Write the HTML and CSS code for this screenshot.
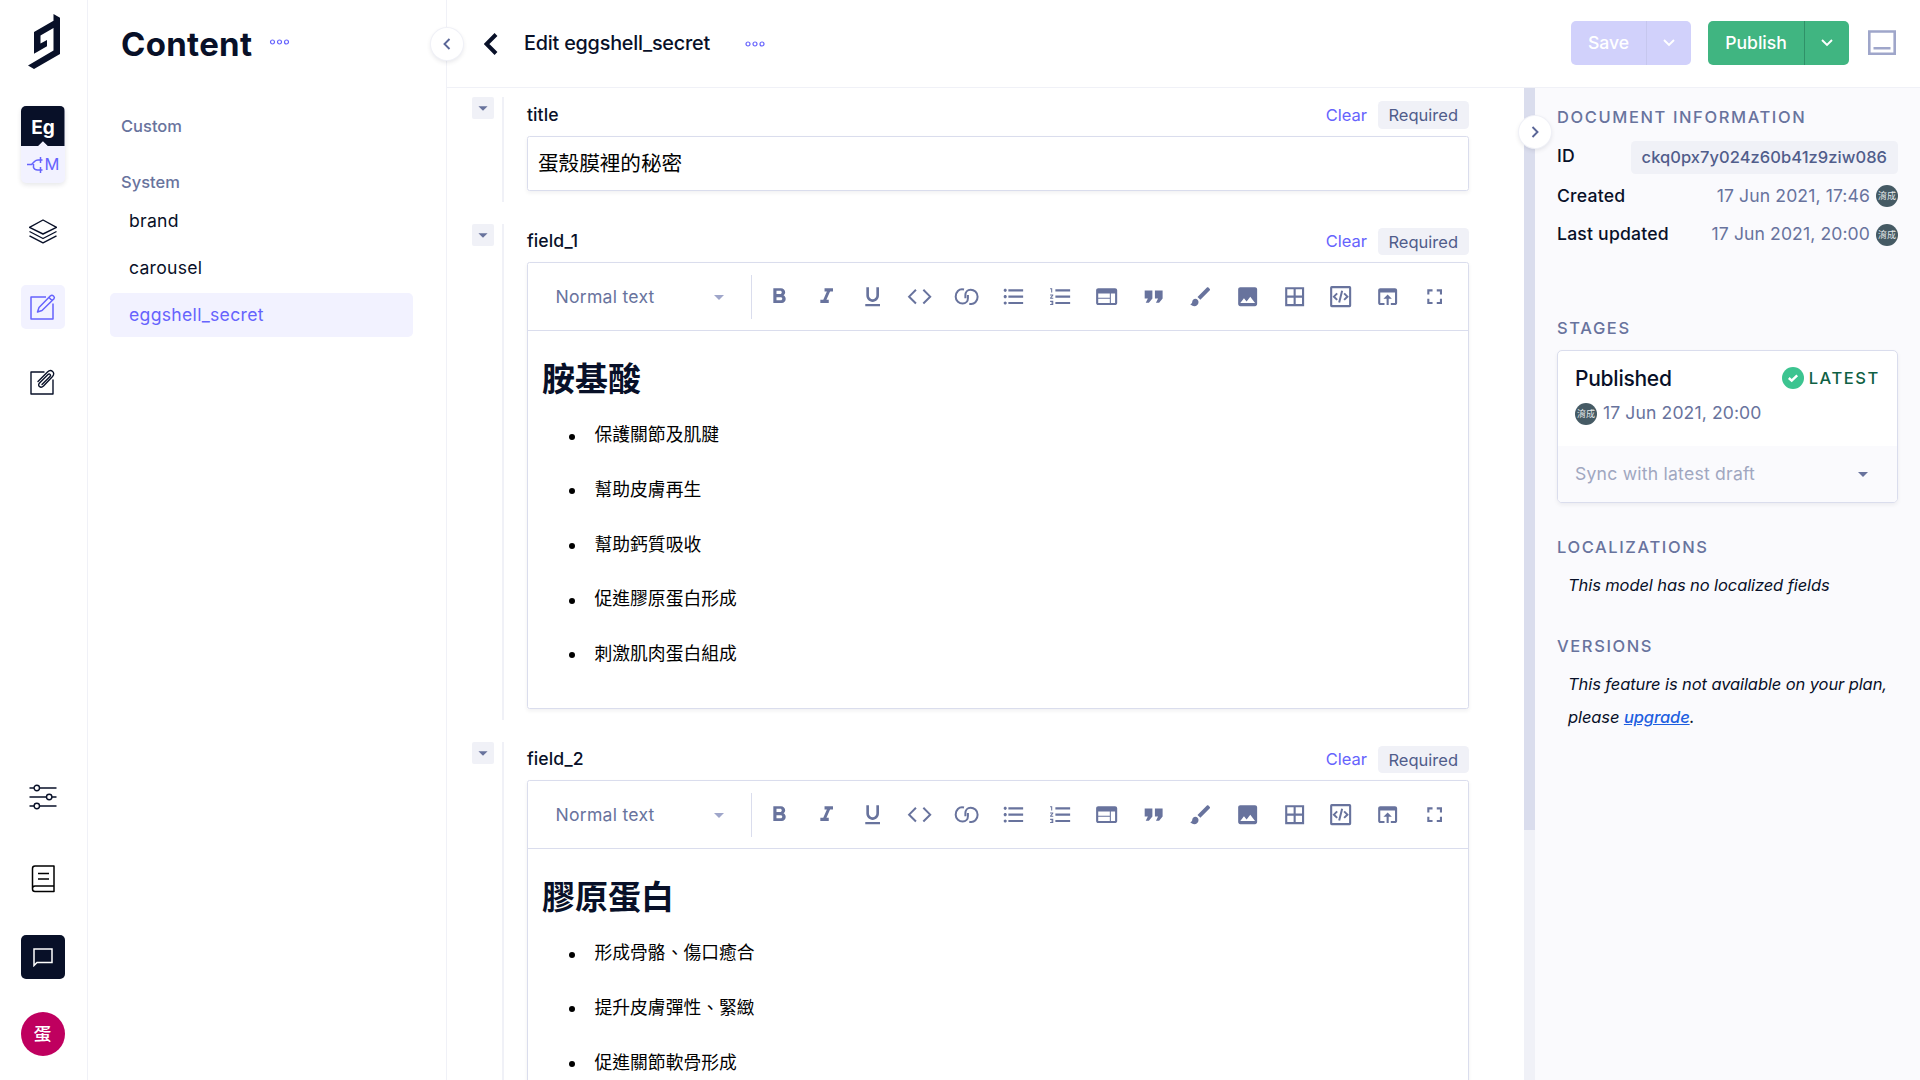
FILE: index.html
```html
<!DOCTYPE html>
<html lang="zh-Hant">
<head>
<meta charset="utf-8">
<title>Edit eggshell_secret</title>
<link rel="stylesheet" href="styles.css">
</head>
<body>
<svg class="sprite" aria-hidden="true">
  <symbol id="caret" viewBox="0 0 24 24"><path d="M7 10l5 5 5-5z"/></symbol>
  <symbol id="dots" viewBox="0 0 20 6"><g fill="none" stroke="currentColor" stroke-width="1.2"><circle cx="3" cy="3" r="2"/><circle cx="10" cy="3" r="2"/><circle cx="17" cy="3" r="2"/></g></symbol>
  <symbol id="bold" viewBox="0 0 24 24"><path d="M15.6 10.79c.97-.67 1.65-1.77 1.65-2.79 0-2.26-1.75-4-4-4H6v14h8.04c2.09 0 3.71-1.7 3.71-3.79 0-1.52-.86-2.82-2.15-3.42zM9 6.5h3.5c.83 0 1.5.67 1.5 1.5s-.67 1.5-1.5 1.5H9v-3zm4 9H9v-3h4c.83 0 1.5.67 1.5 1.5s-.67 1.5-1.5 1.5z"/></symbol>
  <symbol id="italic" viewBox="0 0 24 24"><path d="M10 4v3h2.21l-3.42 8H6v3h8v-3h-2.21l3.42-8H18V4z"/></symbol>
  <symbol id="underline" viewBox="0 0 24 24"><path d="M12 17c3.31 0 6-2.69 6-6V3h-2.5v8c0 1.93-1.57 3.5-3.5 3.5S8.500 12.930 8.500 11V3H6v8c0 3.310 2.690 6 6 6zm-7 2v2h14v-2H5z"/></symbol>
  <symbol id="code" viewBox="0 0 24 24"><path d="M8.500 5.500L2 12l6.500 6.500M15.500 5.500L22 12l-6.500 6.500" fill="none" stroke="currentColor" stroke-width="1.900"/></symbol>
  <symbol id="link" viewBox="0 0 24 24"><path d="M9.500 5.300C4.500 4 1.600 8 1.600 12S5 18.600 8.200 18.600 13.200 16 13.200 13.500V10.500M14.500 18.700C19.500 20 22.400 16 22.400 12S19 5.400 15.800 5.400 10.800 8 10.800 10.500V13.500" fill="none" stroke="currentColor" stroke-width="1.900"/></symbol>
  <symbol id="bullets" viewBox="0 0 24 24"><path d="M4 10.500c-.83 0-1.500.67-1.500 1.500s.67 1.500 1.500 1.500 1.500-.67 1.500-1.500-.67-1.500-1.500-1.500zm0-6c-.83 0-1.500.67-1.500 1.500S3.170 7.500 4 7.500 5.500 6.830 5.500 6 4.830 4.500 4 4.500zm0 12c-.83 0-1.500.68-1.500 1.500s.68 1.500 1.500 1.500 1.500-.68 1.500-1.500-.67-1.500-1.500-1.500zM7 19h14v-2H7v2zm0-6h14v-2H7v2zm0-8v2h14V5H7z"/></symbol>
  <symbol id="numbers" viewBox="0 0 24 24"><path d="M2 17h2v.5H3v1h1v.5H2v1h3v-4H2v1zm1-9h1V4H2v1h1v3zm-1 3h1.800L2 13.100v.9h3v-1H3.200L5 10.900V10H2v1zm5-6v2h14V5H7zm0 14h14v-2H7v2zm0-6h14v-2H7v2z"/></symbol>
  <symbol id="web" viewBox="0 0 24 24"><path d="M20 4H4c-1.100 0-1.990.9-1.990 2L2 18c0 1.100.9 2 2 2h16c1.100 0 2-.9 2-2V6c0-1.100-.9-2-2-2zm-5 14H4v-4h11v4zm0-5H4V9h11v4zm5 5h-4V9h4v9z"/></symbol>
  <symbol id="quote" viewBox="0 0 24 24"><path d="M17.500 17h-3l2-4h-3V5.500h7.300V13zM7.800 17h-3l2-4h-3V5.500h7.300V13z" transform="translate(-.3 .7)"/></symbol>
  <symbol id="brush" viewBox="0 0 24 24"><path d="M7 14c-1.660 0-3 1.340-3 3 0 1.310-1.160 2-2 2 .92 1.220 2.490 2 4 2 2.210 0 4-1.790 4-4 0-1.660-1.340-3-3-3zm13.710-9.370l-1.340-1.340c-.39-.39-1.020-.39-1.410 0L9 12.250 11.750 15l8.960-8.960c.39-.39.39-1.020 0-1.410z"/></symbol>
  <symbol id="image" viewBox="0 0 24 24"><path d="M21 19V5c0-1.100-.9-2-2-2H5c-1.100 0-2 .9-2 2v14c0 1.100.9 2 2 2h14c1.100 0 2-.9 2-2zM8.500 13.500l2.500 3.010L14.500 12l4.500 6H5l3.500-4.500z"/></symbol>
  <symbol id="table" viewBox="0 0 24 24"><path d="M3 3v18h18V3H3zm8 16H5v-6h6v6zm0-8H5V5h6v6zm8 8h-6v-6h6v6zm0-8h-6V5h6v6z"/></symbol>
  <symbol id="embed" viewBox="0 0 24 24"><rect x="3" y="3" width="18" height="18" rx=".5" fill="none" stroke="currentColor" stroke-width="2"/><path d="M8.700 8.900L5.600 12l3.100 3.100M15.300 8.900l3.100 3.100-3.100 3.100M13.400 6.500l-2.800 11" fill="none" stroke="currentColor" stroke-width="1.900"/></symbol>
  <symbol id="browser" viewBox="0 0 24 24"><path d="M19 4H5c-1.110 0-2 .9-2 2v12c0 1.100.89 2 2 2h4v-2H5V8h14v10h-4v2h4c1.100 0 2-.9 2-2V6c0-1.100-.89-2-2-2zm-7 6l-4 4h3v6h2v-6h3l-4-4z"/></symbol>
  <symbol id="full" viewBox="0 0 24 24"><path d="M7 14H5v5h5v-2H7v-3zm-2-4h2V7h3V5H5v5zm12 7h-3v2h5v-5h-2v3zM14 5v2h3v3h2V5h-5z"/></symbol>
</svg>

<nav class="rail">
  <svg class="logo" viewBox="0 0 32 56"><path d="M25.500 0L32 3.800V40L6 55 0 51.500 25.500 36.500V14L12.500 21.500V29.500L19 26V32.200L6 39.800V18L25.500 6.800Z"/></svg>
  <div class="project">
    <div class="project-name">Eg</div>
    <div class="project-env">
      <svg width="17" height="16" viewBox="0 0 17 16" fill="none" stroke="currentColor" stroke-width="1.500"><path d="M0 7.500H4.500L7.500 4.500Q9 3 11 3H15.500M6.500 7V10.500Q7.500 13 10.500 13H15.500M13.500 0V6M13.500 10V16"/></svg><span>M</span>
    </div>
  </div>
  <div class="rail-top">
    <a class="rail-item"><svg width="28" height="25" viewBox="0 0 28 25" fill="none" stroke="currentColor" stroke-width="1.400" stroke-linejoin="round"><path d="M14 1L27.500 8.300 14 15 .5 8.300ZM.5 12.500L14 19.500 27.500 12.500M.5 16.800L14 23.800 27.500 16.800"/></svg></a>
    <a class="rail-item active"><svg width="28" height="28" viewBox="0 0 28 28" fill="none" stroke="currentColor" stroke-width="1.500" stroke-linejoin="round"><path d="M17 4H2V26H24V10.500M8.500 19L10 14.500 21.500 2.800Q23 1.700 24.500 3T25 5.800L13 17.500ZM20 4.500L23 7.500"/></svg></a>
    <a class="rail-item clip"><svg width="28" height="28" viewBox="0 0 28 28" fill="none" stroke="currentColor" stroke-width="1.400" stroke-linejoin="round" stroke-linecap="round"><path d="M15 4H2V26H24V12M9 13.500L18.500 4C22 .500 27 4.500 23.500 8.500L14.500 18C11.500 21 8 17.500 10.500 15L19 6.500C20.500 5 22.500 7 21 8.500L13 16.500"/></svg></a>
  </div>
  <div class="rail-bottom">
    <a class="rail-item"><svg width="28" height="26" viewBox="0 0 28 26" fill="none" stroke="currentColor" stroke-width="1.400"><path d="M.5 4H5M10.500 4H27.500M.5 13H17.500M23 13H27.500M.5 22H5M10.500 22H27.500"/><circle cx="7.800" cy="4" r="2.700"/><circle cx="20.200" cy="13" r="2.700"/><circle cx="7.800" cy="22" r="2.700"/></svg></a>
    <a class="rail-item book"><svg width="24" height="28" viewBox="0 0 24 28" fill="none" stroke="#000" stroke-width="1.500" stroke-linejoin="round"><path d="M23 1H4Q1.500 1 1.500 3.500V24Q1.500 26.500 4 26.500H23ZM1.500 23.500Q1.500 21 4 21H23M7 8.500H18M7 14H18"/></svg></a>
    <a class="rail-item chat"><svg width="20" height="19" viewBox="0 0 20 19" fill="none" stroke="#fff" stroke-width="1.500"><path d="M1 1H19V14.500H4L1 17.500Z"/></svg></a>
    <div class="user">蛋</div>
  </div>
</nav>

<aside class="sidebar">
  <header class="side-head"><h1>Content</h1><svg class="dots" width="21" height="6"><use href="#dots"/></svg></header>
  <div class="group">Custom</div>
  <div class="group system">System</div>
  <a class="model">brand</a>
  <a class="model">carousel</a>
  <a class="model selected">eggshell_secret</a>
  <button class="round fold-left"><svg width="8" height="12" viewBox="0 0 8 12"><path d="M6.500 1L1.500 6l5 5"/></svg></button>
</aside>

<div class="page">
  <header class="topbar">
    <svg class="back" width="14" height="22" viewBox="0 0 14 22"><path d="M12 1.500L2.500 11l9.500 9.500" fill="none" stroke="currentColor" stroke-width="4"/></svg>
    <h2>Edit eggshell_secret</h2>
    <svg class="dots" width="20" height="6"><use href="#dots"/></svg>
    <div class="actions">
      <div class="split save"><span>Save</span><i><svg width="12" height="8" viewBox="0 0 12 8"><path d="M1 1l5 5 5-5"/></svg></i></div>
      <div class="split publish"><span>Publish</span><i><svg width="12" height="8" viewBox="0 0 12 8"><path d="M1 1l5 5 5-5"/></svg></i></div>
      <svg width="28" height="26" viewBox="0 0 28 26" fill="none" stroke="#9fa6ca" stroke-width="2.600"><path d="M1.300 1.500H26.700V23.700H1.300ZM5.500 18.300H22.500"/></svg>
    </div>
  </header>

  <div class="work">
    <main class="form">
      <section class="field title-field">
        <button class="collapse"><svg><use href="#caret"/></svg></button>
        <div class="field-body">
          <div class="label-row"><label>title</label><a>Clear</a><span class="pill">Required</span></div>
          <div class="input">蛋殼膜裡的秘密</div>
        </div>
      </section>

      <section class="field">
        <button class="collapse"><svg><use href="#caret"/></svg></button>
        <div class="field-body">
          <div class="label-row"><label>field_1</label><a>Clear</a><span class="pill">Required</span></div>
          <div class="editor">
            <div class="toolbar">
              <div class="style-select">Normal text<svg><use href="#caret"/></svg></div>
              <div class="tools">
                <svg><use href="#bold"/></svg><svg><use href="#italic"/></svg><svg><use href="#underline"/></svg><svg><use href="#code"/></svg><svg><use href="#link"/></svg><svg><use href="#bullets"/></svg><svg><use href="#numbers"/></svg><svg><use href="#web"/></svg><svg><use href="#quote"/></svg><svg><use href="#brush"/></svg><svg><use href="#image"/></svg><svg><use href="#table"/></svg><svg><use href="#embed"/></svg><svg><use href="#browser"/></svg><svg><use href="#full"/></svg>
              </div>
            </div>
            <div class="content">
              <h3>胺基酸</h3>
              <ul><li>保護關節及肌腱</li><li>幫助皮膚再生</li><li>幫助鈣質吸收</li><li>促進膠原蛋白形成</li><li>刺激肌肉蛋白組成</li></ul>
            </div>
          </div>
        </div>
      </section>

      <section class="field">
        <button class="collapse"><svg><use href="#caret"/></svg></button>
        <div class="field-body">
          <div class="label-row"><label>field_2</label><a>Clear</a><span class="pill">Required</span></div>
          <div class="editor">
            <div class="toolbar">
              <div class="style-select">Normal text<svg><use href="#caret"/></svg></div>
              <div class="tools">
                <svg><use href="#bold"/></svg><svg><use href="#italic"/></svg><svg><use href="#underline"/></svg><svg><use href="#code"/></svg><svg><use href="#link"/></svg><svg><use href="#bullets"/></svg><svg><use href="#numbers"/></svg><svg><use href="#web"/></svg><svg><use href="#quote"/></svg><svg><use href="#brush"/></svg><svg><use href="#image"/></svg><svg><use href="#table"/></svg><svg><use href="#embed"/></svg><svg><use href="#browser"/></svg><svg><use href="#full"/></svg>
              </div>
            </div>
            <div class="content">
              <h3>膠原蛋白</h3>
              <ul><li>形成骨骼、傷口癒合</li><li>提升皮膚彈性、緊緻</li><li>促進關節軟骨形成</li></ul>
            </div>
          </div>
        </div>
      </section>
    </main>

    <div class="scrollbar"><div class="thumb"></div></div>

    <aside class="info">
      <button class="round fold-right"><svg width="8" height="12" viewBox="0 0 8 12"><path d="M1.500 1L6.500 6l-5 5"/></svg></button>
      <h4>Document information</h4>
      <div class="meta id-row"><b>ID</b><span class="id">ckq0px7y024z60b41z9ziw086</span></div>
      <div class="meta"><b>Created</b><span class="date">17 Jun 2021, 17:46</span><em class="avatar">淯成</em></div>
      <div class="meta"><b>Last updated</b><span class="date">17 Jun 2021, 20:00</span><em class="avatar">淯成</em></div>

      <h4 class="stages">Stages</h4>
      <div class="card">
        <div class="card-main">
          <div class="card-title"><span>Published</span><svg width="22" height="22" viewBox="0 0 22 22"><circle cx="11" cy="11" r="11" fill="#3cc490"/><path d="M6.800 11l2.900 2.700 5.500-5.400" fill="none" stroke="#fff" stroke-width="2.400"/></svg><small>LATEST</small></div>
          <div class="card-date"><em class="avatar">淯成</em><span class="date">17 Jun 2021, 20:00</span></div>
        </div>
        <div class="card-sync">Sync with latest draft<svg><use href="#caret"/></svg></div>
      </div>

      <h4 class="local">Localizations</h4>
      <p>This model has no localized fields</p>
      <h4 class="versions">Versions</h4>
      <p>This feature is not available on your plan, please <a>upgrade</a>.</p>
    </aside>
  </div>
</div>
</body>
</html>
```
FILE: styles.css
```css
* { box-sizing: border-box; }
html, body { height: 100%; }
body {
  margin: 0;
  display: flex;
  overflow: hidden;
  background: #fff;
  color: #081028;
  font: 400 17.6px/1.5 Inter, "Noto Sans CJK TC", sans-serif;
}
h1, h2, h3, h4, p, ul { margin: 0; padding: 0; }
button { border: 0; padding: 0; }
svg { display: block; flex: none; }
svg:not([fill]) { fill: currentColor; }
.sprite { display: none; }

/* icon rail */
.rail {
  width: 88px;
  flex: none;
  border-right: 1px solid #f0f1f7;
  display: flex;
  flex-direction: column;
  align-items: center;
  padding: 14px 2px 24px 0;
}
.logo { width: 32px; height: 56px; margin-left: 2px; }
.project {
  width: 44px;
  height: 77px;
  margin-top: 36px;
  border-radius: 5px;
  overflow: hidden;
  background: #f2f2ff;
  box-shadow: 0 2px 5px rgba(8, 16, 40, .1);
}
.project-name {
  height: 40px;
  display: flex;
  align-items: center;
  justify-content: center;
  padding: 5px 0 0 1px;
  color: #fff;
  background: #081028;
  font-weight: 700;
  font-size: 19px;
  clip-path: polygon(0 0, 100% 0, 100% 100%, 62% 100%, 51% 88%, 40% 100%, 0 100%);
}
.project-env {
  height: 37px;
  display: flex;
  align-items: center;
  justify-content: center;
  gap: 1px;
  padding-left: 1px;
  color: #6663fd;
  font-size: 16.500px;
}
.rail-top { display: flex; flex-direction: column; gap: 32px; margin-top: 26px; }
.rail-item {
  width: 44px;
  height: 44px;
  border-radius: 5px;
  padding-left: 1px;
  display: flex;
  align-items: center;
  justify-content: center;
}
.rail-item.active { background: #f2f2ff; color: #6663fd; }
.rail-item.clip { margin-top: -1px; }
.rail-bottom { margin-top: auto; display: flex; flex-direction: column; }
.rail-item.book { margin: 38px 0 34px; }
.rail-item.chat { background: #081028; padding-left: 0; }
.user {
  width: 44px;
  height: 44px;
  margin-top: 33px;
  border-radius: 50%;
  background: #bf005f;
  color: #fff;
  font-weight: 500;
  display: flex;
  align-items: center;
  justify-content: center;
}

/* model list */
.sidebar {
  position: relative;
  width: 359px;
  flex: none;
  border-right: 1px solid #f0f1f7;
  padding: 0 33px 0 22px;
}
.side-head {
  height: 88px;
  padding-left: 11px;
  display: flex;
  align-items: center;
  gap: 17px;
}
.side-head h1 { font-size: 33px; line-height: 44px; font-weight: 700; letter-spacing: .3px; }
.side-head .dots { margin-bottom: 5px; }
.dots { color: #6663fd; }
.group {
  margin: 24px 0 0 11px;
  height: 28px;
  line-height: 28px;
  font-size: 16.500px;
  font-weight: 500;
  color: #68739d;
}
.group.system { margin: 28px 0 3px 11px; }
.model {
  display: block;
  height: 44px;
  line-height: 44px;
  margin-bottom: 3px;
  padding-left: 19px;
  border-radius: 5px;
  color: #081028;
  letter-spacing: .25px;
}
.model.selected { background: #f2f2ff; color: #6663fd; letter-spacing: .3px; }
.round {
  position: absolute;
  z-index: 2;
  width: 32px;
  height: 32px;
  border-radius: 50%;
  background: #fff;
  color: #5a6697;
  display: flex;
  align-items: center;
  justify-content: center;
  box-shadow: 0 0 0 1px #f0f1f7, 0 2px 5px rgba(8, 16, 40, .12);
}
.round path, .split path { fill: none; stroke: currentColor; stroke-width: 1.900; }
.fold-left { right: -17px; top: 28px; }
.fold-right { left: -16px; top: 28px; }

/* top bar */
.page { flex: 1; min-width: 0; display: flex; flex-direction: column; }
.topbar {
  height: 88px;
  flex: none;
  border-bottom: 1px solid #f0f1f7;
  display: flex;
  align-items: center;
  padding: 0 24px 0 37px;
}
.topbar h2 { font-size: 19.800px; font-weight: 500; letter-spacing: -.2px; margin: 0 35px 0 26px; }
.actions { margin: 0 0 1px auto; display: flex; align-items: center; gap: 17px; }
.actions > svg { margin-left: 2px; }
.split {
  height: 44px;
  display: flex;
  border-radius: 5px;
  color: #fff;
  font-weight: 500;
  line-height: 44px;
}
.split span { flex: 1; text-align: center; border-right: 1px solid; }
.split i { width: 44px; display: flex; align-items: center; justify-content: center; }
.save { width: 120px; background: #d1d1fb; }
.save span { border-color: #c6c7ee; }
.publish { width: 141px; background: #40b581; }
.publish span { border-color: #2f9168; }

/* form */
.work { flex: 1; min-height: 0; display: flex; }
.form { flex: 1; min-width: 0; overflow: hidden; padding: 9px 55px 0 25px; }
.field { display: flex; gap: 8px; height: 495.600px; margin-bottom: 22.400px; }
.collapse {
  width: 22px;
  height: 22px;
  border-radius: 2px;
  background: #f0f1f7;
  color: #68739d;
}
.collapse svg { width: 22px; height: 22px; }
.field-body { flex: 1; border-left: 2px solid #f0f1f7; padding: 3.700px 0 11px 23px; min-width: 0; }
.label-row { display: flex; align-items: center; height: 28px; margin-bottom: 6.300px; }
.title-field { height: 105px; margin-bottom: 22px; }
.title-field .field-body { padding-top: 4px; }
.title-field .label-row { margin-bottom: 7px; }
.label-row label { flex: 1; font-weight: 500; letter-spacing: .1px; }
.label-row a { color: #6663fd; font-size: 16.500px; margin-right: 11px; }
.pill {
  height: 27.500px;
  line-height: 28px;
  padding: 0 11px 0 10.500px;
  border-radius: 4.400px;
  background: #f0f1f7;
  color: #505d8b;
  font-size: 16.500px;
}
.input, .editor {
  border: 1px solid #dadded;
  border-radius: 2.500px;
  box-shadow: 0 2px 4px rgba(8, 16, 40, .06);
}
.input { height: 55px; line-height: 53px; padding: 0 10px; font-size: 20.600px; color: #000; }
.editor { height: 447px; }
.toolbar {
  height: 68.500px;
  border-bottom: 1px solid #dadded;
  display: flex;
  align-items: center;
  padding-right: 10px;
}
.style-select {
  width: 224px;
  height: 44px;
  border-right: 1px solid #dadded;
  padding: 0 20px 0 27.500px;
  display: flex;
  align-items: center;
  justify-content: space-between;
  color: #68739d;
  letter-spacing: .25px;
}
.style-select svg { width: 24px; height: 24px; color: #9fa6ca; }
.tools { flex: 1; display: flex; justify-content: space-around; padding-left: 4px; color: #68739d; }
.tools svg { width: 25.300px; height: 25.300px; }
.content { padding: 20px 14px; }
.content h3 { font-size: 33px; line-height: 57px; font-weight: 700; }
.content ul { list-style: none; color: #000; }
.content li {
  height: 54.600px;
  line-height: 54.600px;
  padding-left: 25px;
  font-size: 17.800px;
  display: flex;
  align-items: center;
}
.content li::before {
  content: "";
  width: 6px;
  height: 6px;
  margin: 2px 19.500px 0 2px;
  border-radius: 50%;
  background: #000;
}

/* scroll bar */
.scrollbar { width: 11px; flex: none; background: #f0f1f7; }
.thumb { height: 742px; background: #dadded; }

/* document panel */
.info { position: relative; width: 385px; flex: none; background: #fafafd; padding: 15px 22px 0; }
.info h4 {
  height: 28px;
  line-height: 28px;
  color: #68739d;
  font-size: 16.500px;
  font-weight: 500;
  letter-spacing: 1.600px;
  text-transform: uppercase;
}
.meta { display: flex; align-items: center; height: 38.700px; }
.meta b { flex: 1; font-weight: 500; letter-spacing: .2px; }
.meta.id-row { height: 33px; margin: 10px 0 2.600px; }
.id-row b { padding-bottom: 3px; }
.id {
  height: 33px;
  line-height: 33px;
  padding: 0 11px;
  border-radius: 4.400px;
  background: #f0f1f7;
  color: #505d8b;
  font-size: 16.500px;
  font-weight: 500;
  letter-spacing: .04px;
}
.date { color: #68739d; letter-spacing: .1px; }
.avatar {
  width: 22px;
  height: 22px;
  margin-left: 6px;
  border-radius: 50%;
  background: #455a64;
  color: #e3e7e9;
  font-size: 9px;
  font-style: normal;
  line-height: 22px;
  text-align: center;
}
.info .stages { margin-top: 60.400px; }
.card {
  height: 153px;
  margin-top: 8px;
  border: 1px solid #dadded;
  border-radius: 5px;
  background: #fff;
  overflow: hidden;
  box-shadow: 0 2px 4px rgba(8, 16, 40, .06);
}
.card-main { height: 95px; padding: 12px 17px 0; }
.card-title { display: flex; align-items: center; height: 30px; }
.card-title span { flex: 1; font-size: 21px; font-weight: 500; letter-spacing: -.25px; }
.card-title small { font-size: 16.500px; font-weight: 500; letter-spacing: 1.600px; color: #0f6144; margin-left: 5px; }
.card-date { display: flex; align-items: center; gap: 6px; margin-top: 7px; }
.card-date .avatar { margin-left: 0; }
.card-sync {
  height: 56px;
  padding: 0 22px 0 17px;
  display: flex;
  align-items: center;
  justify-content: space-between;
  background: #fafafd;
  color: #a0a7c0;
  letter-spacing: .22px;
}
.card-sync svg { width: 24px; height: 24px; color: #68739d; }
.info .local { margin-top: 30px; }
.info p { padding-left: 11px; margin-top: 8px; font-size: 16.500px; line-height: 33px; font-style: italic; letter-spacing: -.1px; }
.info p a { color: #1f5fe0; font-weight: 500; text-decoration: underline; }
.info .versions { margin-top: 30px; }
```
